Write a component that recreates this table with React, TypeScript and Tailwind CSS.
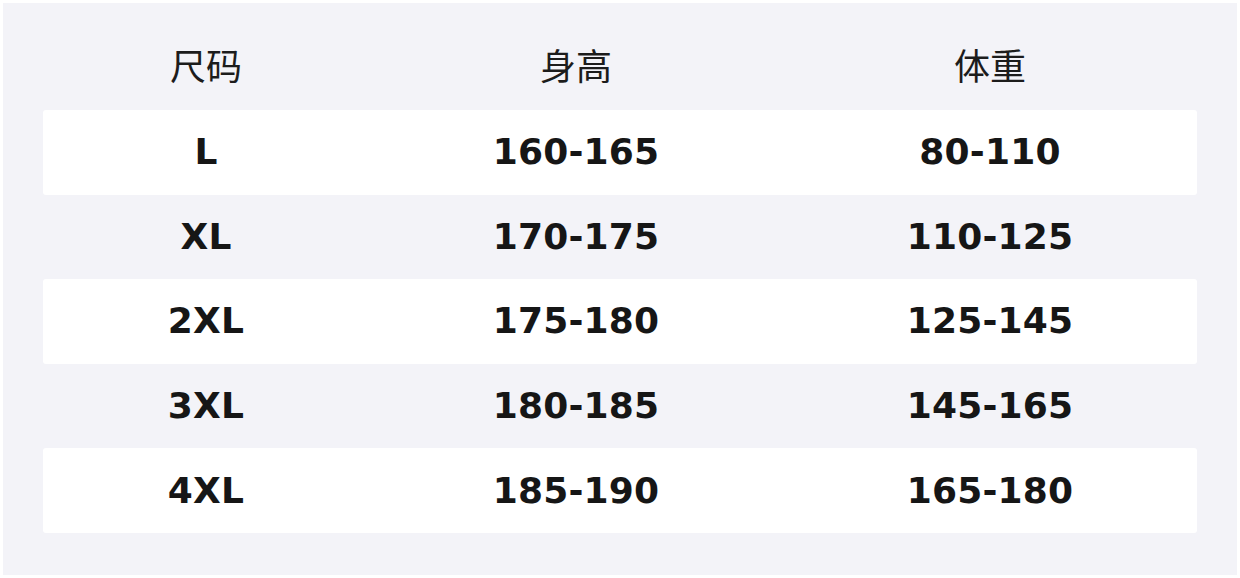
import React from "react";

const rows = [
  ["L", "160-165", "80-110"],
  ["XL", "170-175", "110-125"],
  ["2XL", "175-180", "125-145"],
  ["3XL", "180-185", "145-165"],
  ["4XL", "185-190", "165-180"],
];

export default function App() {
  return (
    <div className="w-[1240px] h-[578px] bg-white p-[3px]">
      <div className="w-full h-full bg-[#f3f3f8] px-[40px] pb-[40px] flex flex-col">
        <div
          className="h-[107px] pt-[41px] grid grid-cols-[326px_414px_1fr] text-[36px] leading-[40px] text-[#1c1c1c]"
          style={{ fontFamily: '"Noto Sans CJK SC", "Noto Sans", sans-serif' }}
        >
          <div className="text-center">尺码</div>
          <div className="text-center">身高</div>
          <div className="text-center">体重</div>
        </div>
        <div className="flex flex-col">
          {rows.map((r, i) => (
            <div
              key={i}
              className={
                "h-[84.6px] grid grid-cols-[326px_414px_1fr] items-center rounded-[3px] text-[36px] font-bold text-[#161616] " +
                (i % 2 === 0 ? "bg-white" : "bg-transparent")
              }
              style={{ fontFamily: '"DejaVu Sans", sans-serif' }}
            >
              {r.map((c, j) => (
                <div key={j} className="text-center leading-[40px] tracking-[0.2px]">
                  {c}
                </div>
              ))}
            </div>
          ))}
        </div>
      </div>
    </div>
  );
}
